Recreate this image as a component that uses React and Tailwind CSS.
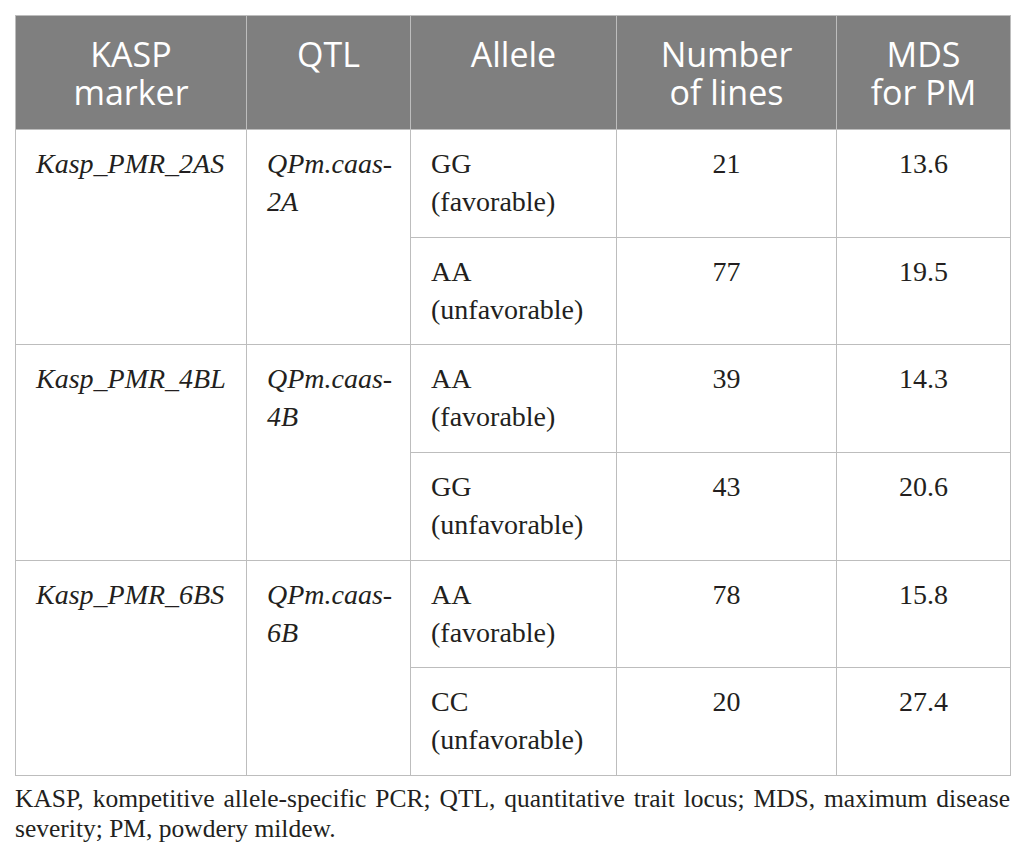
const ROWS = [
  {
    marker: "Kasp_PMR_2AS",
    qtl: ["QPm.caas-", "2A"],
    alleles: [
      { allele: "GG", note: "(favorable)", lines: 21, mds: "13.6" },
      { allele: "AA", note: "(unfavorable)", lines: 77, mds: "19.5" },
    ],
  },
  {
    marker: "Kasp_PMR_4BL",
    qtl: ["QPm.caas-", "4B"],
    alleles: [
      { allele: "AA", note: "(favorable)", lines: 39, mds: "14.3" },
      { allele: "GG", note: "(unfavorable)", lines: 43, mds: "20.6" },
    ],
  },
  {
    marker: "Kasp_PMR_6BS",
    qtl: ["QPm.caas-", "6B"],
    alleles: [
      { allele: "AA", note: "(favorable)", lines: 78, mds: "15.8" },
      { allele: "CC", note: "(unfavorable)", lines: 20, mds: "27.4" },
    ],
  },
];

const thClass =
  "border border-[#bdbdbd] px-3 pt-[19px] pb-[18px] text-center align-top font-normal text-[34px] leading-[38px] text-white";
const tdClass =
  "border border-[#bdbdbd] px-[20px] pt-[15px] pb-[15.7px] align-top text-[28px] leading-[38px]";

export default function App() {
  return (
    <div
      className="min-h-screen bg-white px-[15px] pt-[15px] text-[#231f20]"
      style={{ fontFamily: '"Liberation Serif", "Times New Roman", serif' }}
    >
      <table className="w-[995px] table-fixed border-collapse">
        <colgroup>
          <col className="w-[231px]" />
          <col className="w-[164px]" />
          <col className="w-[206px]" />
          <col className="w-[220px]" />
          <col className="w-[174px]" />
        </colgroup>
        <thead>
          <tr
            className="bg-[#7f7f7f]"
            style={{ fontFamily: '"Open Sans", "Noto Sans", sans-serif' }}
          >
            <th className={thClass}>
              KASP
              <br />
              marker
            </th>
            <th className={thClass}>QTL</th>
            <th className={thClass}>Allele</th>
            <th className={thClass}>
              Number
              <br />
              of lines
            </th>
            <th className={thClass}>
              MDS
              <br />
              for PM
            </th>
          </tr>
        </thead>
        <tbody>
          {ROWS.map((r) =>
            r.alleles.map((a, i) => (
              <tr key={r.marker + a.allele}>
                {i === 0 && (
                  <>
                    <td rowSpan={2} className={`${tdClass} italic text-[27px]`}>
                      {r.marker}
                    </td>
                    <td rowSpan={2} className={`${tdClass} italic text-[27px]`}>
                      {r.qtl[0]}
                      <br />
                      {r.qtl[1]}
                    </td>
                  </>
                )}
                <td className={tdClass}>
                  {a.allele}
                  <br />
                  {a.note}
                </td>
                <td className={`${tdClass} text-center`}>{a.lines}</td>
                <td className={`${tdClass} text-center`}>{a.mds}</td>
              </tr>
            ))
          )}
        </tbody>
      </table>
      <p className="mt-[8px] w-[995px] text-justify text-[25.5px] leading-[30px]">
        KASP, kompetitive allele-specific PCR; QTL, quantitative trait locus; MDS, maximum disease
        severity; PM, powdery mildew.
      </p>
    </div>
  );
}
